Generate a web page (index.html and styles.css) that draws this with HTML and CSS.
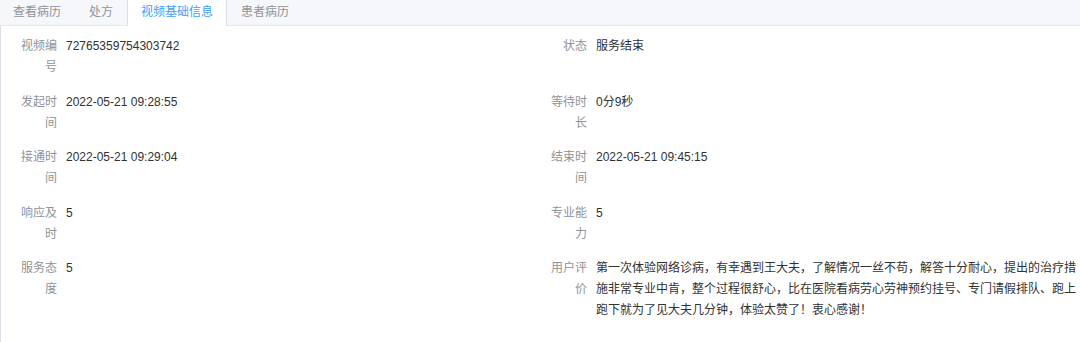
FILE: index.html
```html
<!DOCTYPE html>
<html>
<head>
  <meta charset="UTF-8">
  <title>视频基础信息</title>
  <link rel="stylesheet" href="styles.css">
</head>
<body>
  <div class="tabs-card">
    <div class="tabs-header">
      <div class="tab">查看病历</div>
      <div class="tab">处方</div>
      <div class="tab active">视频基础信息</div>
      <div class="tab">患者病历</div>
    </div>

    <div class="tabs-content">
      <div class="info-grid">
        <div class="field">
          <div class="field-label">视频编号</div>
          <div class="field-value">72765359754303742</div>
        </div>
        <div class="field">
          <div class="field-label">状态</div>
          <div class="field-value">服务结束</div>
        </div>

        <div class="field">
          <div class="field-label">发起时间</div>
          <div class="field-value">2022-05-21 09:28:55</div>
        </div>
        <div class="field">
          <div class="field-label">等待时长</div>
          <div class="field-value">0分9秒</div>
        </div>

        <div class="field">
          <div class="field-label">接通时间</div>
          <div class="field-value">2022-05-21 09:29:04</div>
        </div>
        <div class="field">
          <div class="field-label">结束时间</div>
          <div class="field-value">2022-05-21 09:45:15</div>
        </div>

        <div class="field">
          <div class="field-label">响应及时</div>
          <div class="field-value">5</div>
        </div>
        <div class="field">
          <div class="field-label">专业能力</div>
          <div class="field-value">5</div>
        </div>

        <div class="field">
          <div class="field-label">服务态度</div>
          <div class="field-value">5</div>
        </div>
        <div class="field">
          <div class="field-label">用户评价</div>
          <div class="field-value comment">第一次体验网络诊病，有幸遇到王大夫，了解情况一丝不苟，解答十分耐心，提出的治疗措施非常专业中肯，整个过程很舒心，比在医院看病劳心劳神预约挂号、专门请假排队、跑上跑下就为了见大夫几分钟，体验太赞了！衷心感谢！</div>
        </div>
      </div>
    </div>
  </div>
</body>
</html>
```

FILE: styles.css
```css
* { box-sizing: border-box; }
body {
  margin: 0;
  background: #fff;
  font-family: "Liberation Sans", "Noto Sans CJK SC", sans-serif;
  font-size: 12px;
  color: #303133;
}
.tabs-card {
  width: 1080px;
  height: 342px;
  overflow: hidden;
}
.tabs-header {
  display: flex;
  height: 26px;
  background: #f5f7fa;
  border-bottom: 1px solid #e4e7ed;
}
.tab {
  height: 26px;
  line-height: 25px;
  padding: 0 13px;
  border-left: 1px solid transparent;
  border-right: 1px solid transparent;
  color: #909399;
}
.tab:first-child { margin-left: -1px; }
.tab.active {
  background: #fff;
  color: #409eff;
  border-left-color: #dcdfe6;
  border-right-color: #dcdfe6;
}
.tabs-content {
  height: 316px;
  padding: 10px 4px 0 9px;
  border-left: 1px solid #dcdfe6;
}
.info-grid {
  display: grid;
  grid-template-columns: 530px 1fr;
}
.field {
  display: flex;
  align-items: flex-start;
  margin-bottom: 13.5px;
  line-height: 21px;
}
.field-label {
  width: 47px;
  min-height: 42px;
  flex-shrink: 0;
  margin-right: 9px;
  text-align: right;
  color: #909399;
}
.field-value {
  flex: 1;
  color: #303133;
}
```
